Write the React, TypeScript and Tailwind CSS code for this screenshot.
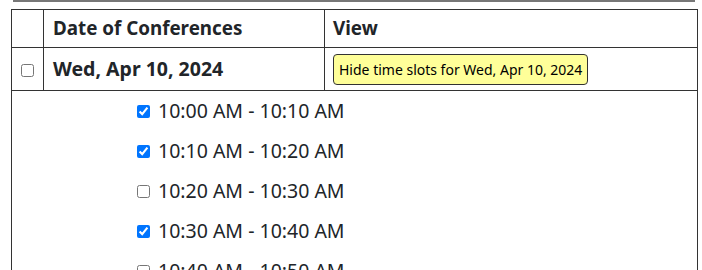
const slots = [
  { label: "10:00 AM - 10:10 AM", checked: true },
  { label: "10:10 AM - 10:20 AM", checked: true },
  { label: "10:20 AM - 10:30 AM", checked: false },
  { label: "10:30 AM - 10:40 AM", checked: true },
  { label: "10:40 AM - 10:50 AM", checked: false },
];

export default function App() {
  return (
    <div className="h-[270px] bg-white text-[#212529] font-['Noto_Sans',sans-serif] overflow-hidden">
      <div className="ml-[13px] w-[682px] h-[2px] bg-[#777]" />
      <table className="mt-[7px] ml-[11px] w-[687px] border-collapse border border-[#333]">
        <thead>
          <tr className="h-[38px]">
            <th className="w-[32px] border border-[#333]" />
            <th className="w-[281px] border border-[#333] px-[9px] text-left text-[18.8px] font-bold">
              Date of Conferences
            </th>
            <th className="border border-[#333] px-[8px] text-left text-[18.8px] font-bold">View</th>
          </tr>
        </thead>
        <tbody>
          <tr className="h-[43px]">
            <td className="border border-[#333] text-center align-middle">
              <input type="checkbox" className="w-[13px] h-[13px] align-middle" />
            </td>
            <td className="border border-[#333] px-[9px] text-[19.5px] font-bold">Wed, Apr 10, 2024</td>
            <td className="border border-[#333] px-[8px]">
              <button className="h-[31px] px-[5px] rounded-[4px] border border-[#333] bg-[#ffff99] text-[14px] text-black">
                Hide time slots for Wed, Apr 10, 2024
              </button>
            </td>
          </tr>
          <tr>
            <td colSpan={3} className="border border-[#333] pl-[125px]">
              {slots.map((s) => (
                <label key={s.label} className="flex items-center h-[40px] gap-[8px] text-[19.5px]">
                  <input type="checkbox" defaultChecked={s.checked} className="w-[13px] h-[13px]" />
                  {s.label}
                </label>
              ))}
            </td>
          </tr>
        </tbody>
      </table>
    </div>
  );
}
